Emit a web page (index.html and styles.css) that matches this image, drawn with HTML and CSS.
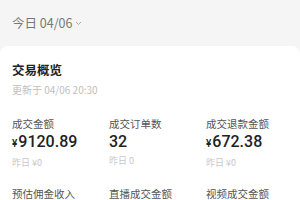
FILE: index.html
```html
<!DOCTYPE html>
<html lang="zh">
<head>
<meta charset="utf-8">
<link rel="stylesheet" href="styles.css">
</head>
<body>
<div class="page">
  <div class="date">今日 04/06<svg class="chev" width="7" height="5" viewBox="0 0 7 5"><path d="M1 1 L3.5 3.5 L6 1" fill="none" stroke="#aaa" stroke-width="1"/></svg></div>
  <div class="card">
    <div class="title">交易概览</div>
    <div class="updated">更新于 04/06 20:30</div>
    <div class="grid">
      <div class="metric">
        <div class="label">成交金额</div>
        <div class="value"><span class="yen">¥</span>9120.89</div>
        <div class="prev">昨日 ¥0</div>
      </div>
      <div class="metric">
        <div class="label">成交订单数</div>
        <div class="value">32</div>
        <div class="prev">昨日 0</div>
      </div>
      <div class="metric">
        <div class="label">成交退款金额</div>
        <div class="value"><span class="yen">¥</span>672.38</div>
        <div class="prev">昨日 ¥0</div>
      </div>
      <div class="metric">
        <div class="label">预估佣金收入</div>
      </div>
      <div class="metric">
        <div class="label">直播成交金额</div>
      </div>
      <div class="metric">
        <div class="label">视频成交金额</div>
      </div>
    </div>
  </div>
</div>
</body>
</html>
```
FILE: styles.css
```css
html, body {
  margin: 0;
  padding: 0;
  background: #f5f5f5;
  font-family: "Noto Sans CJK SC", "Noto Sans", sans-serif;
}
.page {
  width: 300px;
  height: 200px;
  overflow: hidden;
}
.date {
  height: 46px;
  padding-left: 12px;
  display: flex;
  align-items: center;
  font-size: 12.5px;
  color: #777;
  box-sizing: border-box;
  padding-bottom: 2px;
}
.chev {
  margin-left: 3px;
  margin-top: 2px;
}
.card {
  background: #fff;
  border-radius: 8px 8px 0 0;
  padding: 16px 12px 0 12px;
  min-height: 200px;
}
.title {
  font-size: 12.5px;
  font-weight: bold;
  color: #222;
  line-height: 16px;
}
.updated {
  font-size: 10px;
  color: #c0c0c0;
  line-height: 14px;
  margin-top: 5px;
}
.grid {
  display: grid;
  grid-template-columns: 97px 97px 97px;
  row-gap: 18px;
  margin-top: 19.5px;
}
.label {
  font-size: 10.5px;
  color: #555;
  line-height: 14px;
}
.value {
  font-family: "Roboto", "Noto Sans", sans-serif;
  font-size: 16px;
  color: #222;
  line-height: 20px;
  margin-top: 1px;
  font-weight: 500;
}
.yen {
  font-size: 10px;
  margin-right: 1px;
}
.prev {
  font-size: 9px;
  color: #c8c8c8;
  line-height: 12px;
  margin-top: 3.5px;
}
```
